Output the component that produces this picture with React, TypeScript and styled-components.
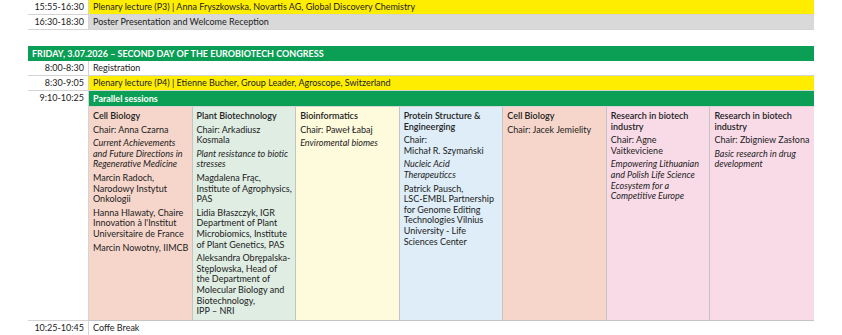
import styled, { createGlobalStyle } from "styled-components";

const GlobalStyle = createGlobalStyle`
  body {
    margin: 0;
    background: #ffffff;
  }
`;

type Tone = "yellow" | "grey" | "green" | "white";

const toneColors: Record<Tone, string> = {
  yellow: "#ffed00",
  grey: "#d9d9d9",
  green: "#0b9e55",
  white: "#ffffff",
};

type Shade = "salmon" | "mint" | "cream" | "sky" | "pink";

const shadeColors: Record<Shade, string> = {
  salmon: "#f6d6ca",
  mint: "#dfede3",
  cream: "#fefadc",
  sky: "#deedf7",
  pink: "#f9dbe8",
};

const Table = styled.div`
  width: 786px;
  margin-left: 28px;
  font-family: Lato, "Liberation Sans", sans-serif;
  font-size: 9px;
  color: #222222;
`;

const Row = styled.div`
  display: grid;
  grid-template-columns: 61px 1fr;
`;

const Time = styled.div`
  text-align: right;
  padding-right: 4px;
  line-height: 14px;
  border-right: 1px solid #d4d4d4;
  border-bottom: 1px solid #d4d4d4;
`;

const Content = styled.div<{ $tone: Tone }>`
  background: ${({ $tone }) => toneColors[$tone]};
  color: ${({ $tone }) => ($tone === "green" ? "#ffffff" : "#222222")};
  font-weight: ${({ $tone }) => ($tone === "green" ? 700 : 400)};
  padding-left: 4px;
  line-height: ${({ $tone }) => ($tone === "green" ? "15px" : "14px")};
  border-bottom: 1px solid #d4d4d4;
`;

const DayHeader = styled.div`
  margin-top: 16px;
  background: #0b9e55;
  color: #ffffff;
  font-weight: 700;
  padding-left: 4px;
  line-height: 15px;
`;

const Block = styled.div`
  display: flex;
  flex-direction: column;
`;

const Sessions = styled.div`
  display: grid;
  grid-template-columns: repeat(7, 1fr);
  height: 213px;
  border-bottom: 1px solid #c4c4c4;
`;

const Session = styled.div<{ $shade: Shade }>`
  background: ${({ $shade }) => shadeColors[$shade]};
  border-right: 1px solid #c4c4c4;
  padding: 4px 3px 0 4px;
  line-height: 10.6px;

  &:last-child {
    border-right: none;
  }
`;

const Title = styled.div`
  font-weight: 600;
`;

const Line = styled.div<{ $italic?: boolean }>`
  margin-top: 3px;
  font-style: ${({ $italic }) => ($italic ? "italic" : "normal")};
`;

interface SessionData {
  shade: Shade;
  title: string;
  chair: string;
  topic?: string;
  speakers: string[];
}

const sessions: SessionData[] = [
  {
    shade: "salmon",
    title: "Cell Biology",
    chair: "Chair: Anna Czarna",
    topic: "Current Achievements and Future Directions in Regenerative Medicine",
    speakers: [
      "Marcin Radoch, Narodowy Instytut Onkologii",
      "Hanna Hlawaty, Chaire Innovation à l'Institut Universitaire de France",
      "Marcin Nowotny, IIMCB",
    ],
  },
  {
    shade: "mint",
    title: "Plant Biotechnology",
    chair: "Chair: Arkadiusz Kosmala",
    topic: "Plant resistance to biotic stresses",
    speakers: [
      "Magdalena Frąc, Institute of Agrophysics, PAS",
      "Lidia Błaszczyk, IGR Department of Plant Microbiomics, Institute of Plant Genetics, PAS",
      "Aleksandra Obrępalska-Stęplowska, Head of the Department of Molecular Biology and Biotechnology,\nIPP – NRI",
    ],
  },
  {
    shade: "cream",
    title: "Bioinformatics",
    chair: "Chair: Paweł Łabaj",
    topic: "Enviromental biomes",
    speakers: [],
  },
  {
    shade: "sky",
    title: "Protein Structure & Engineerging",
    chair: "Chair:\nMichał R. Szymański",
    topic: "Nucleic Acid Therapeuticcs",
    speakers: [
      "Patrick Pausch,\nLSC-EMBL Partnership for Genome Editing Technologies Vilnius University - Life Sciences Center",
    ],
  },
  {
    shade: "salmon",
    title: "Cell Biology",
    chair: "Chair: Jacek Jemielity",
    speakers: [],
  },
  {
    shade: "pink",
    title: "Research in biotech industry",
    chair: "Chair: Agne Vaitkeviciene",
    topic: "Empowering Lithuanian and Polish Life Science Ecosystem for a Competitive Europe",
    speakers: [],
  },
  {
    shade: "pink",
    title: "Research in biotech industry",
    chair: "Chair: Zbigniew Zasłona",
    topic: "Basic research in drug development",
    speakers: [],
  },
];

const Multi = ({ text }: { text: string }) => (
  <>
    {text.split("\n").map((part, i) => (
      <span key={i}>
        {i > 0 && <br />}
        {part}
      </span>
    ))}
  </>
);

const App = () => {
  return (
    <>
      <GlobalStyle />
      <Table>
        <Row>
          <Time>15:55-16:30</Time>
          <Content $tone="yellow">
            Plenary lecture (P3) | Anna Fryszkowska, Novartis AG, Global Discovery Chemistry
          </Content>
        </Row>
        <Row>
          <Time>16:30-18:30</Time>
          <Content $tone="grey">Poster Presentation and Welcome Reception</Content>
        </Row>

        <DayHeader>FRIDAY, 3.07.2026 – SECOND DAY OF THE EUROBIOTECH CONGRESS</DayHeader>
        <Row>
          <Time>8:00-8:30</Time>
          <Content $tone="white">Registration</Content>
        </Row>
        <Row>
          <Time>8:30-9:05</Time>
          <Content $tone="yellow">
            Plenary lecture (P4) | Etienne Bucher, Group Leader, Agroscope, Switzerland
          </Content>
        </Row>
        <Row>
          <Time>9:10-10:25</Time>
          <Block>
            <Content $tone="green">Parallel sessions</Content>
            <Sessions>
              {sessions.map((s, i) => (
                <Session key={i} $shade={s.shade}>
                  <Title>{s.title}</Title>
                  <Line>
                    <Multi text={s.chair} />
                  </Line>
                  {s.topic && <Line $italic>{s.topic}</Line>}
                  {s.speakers.map((sp, j) => (
                    <Line key={j}>
                      <Multi text={sp} />
                    </Line>
                  ))}
                </Session>
              ))}
            </Sessions>
          </Block>
        </Row>
        <Row>
          <Time>10:25-10:45</Time>
          <Content $tone="white">Coffe Break</Content>
        </Row>
      </Table>
    </>
  );
};

export default App;
